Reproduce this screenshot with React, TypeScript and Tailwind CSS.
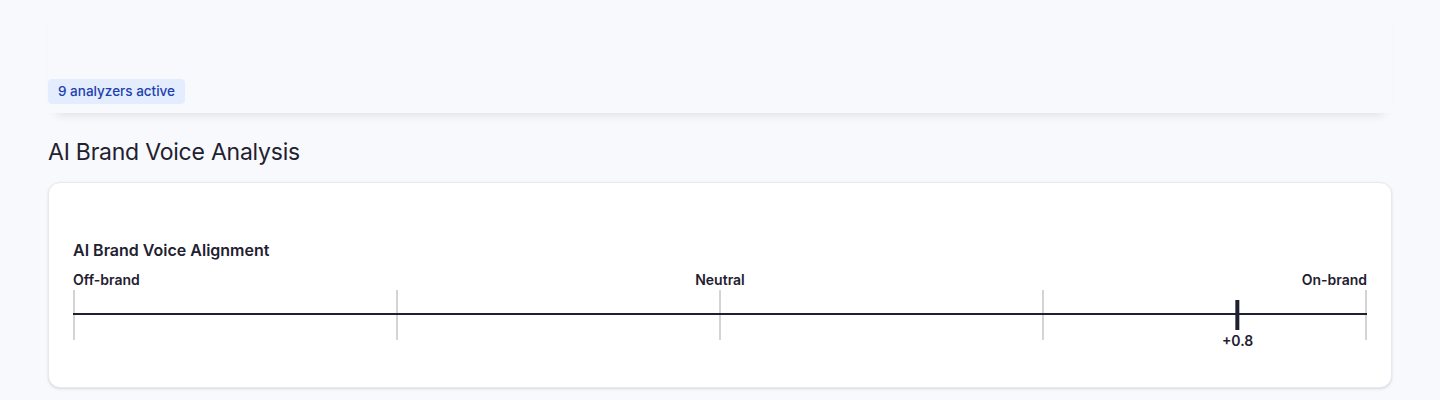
import React from "react"

const ticks = [0, 25, 50, 75, 100]

function AlignmentScale({ score }: { score: number }) {
  const pos = ((score + 1) / 2) * 100
  return (
    <div>
      <div className="grid grid-cols-3 text-sm font-semibold text-[#1f2130]">
        <span className="text-left">Off-brand</span>
        <span className="text-center">Neutral</span>
        <span className="text-right">On-brand</span>
      </div>
      <div className="relative flex h-[50px] justify-between">
        {ticks.map((t) => (
          <div key={t} className="h-full w-0.5 bg-[#d4d4d8]" />
        ))}
        <div className="absolute inset-x-0 top-[23px] h-0.5 bg-[#1f2130]" />
        <div
          className="absolute top-[10px] flex -translate-x-1/2 flex-col items-center gap-px"
          style={{ left: `${pos}%` }}
        >
          <div className="h-[30px] w-1 bg-[#1f2130]" />
          <span className="text-sm font-semibold text-[#1f2130]">+{score.toFixed(1)}</span>
        </div>
      </div>
    </div>
  )
}

function App() {
  return (
    <div className="min-h-screen bg-[#f8f9fc] px-12 font-['Inter',sans-serif]">
      <header className="flex bg-[#f8f9fc] pt-[79px] pb-[9px] shadow-[0_9px_10px_-8px_rgba(0,0,0,0.12)]">
        <span className="rounded bg-[#e4edfd] px-2.5 py-1 text-[13.5px] leading-[17px] font-medium text-[#1e40af]">
          9 analyzers active
        </span>
      </header>

      <h2 className="mt-[23px] text-[23px] leading-8 tracking-[-0.01em] text-[#1f2130]">
        AI Brand Voice Analysis
      </h2>

      <section className="mt-[14px] rounded-xl border border-[#e8e9ee] bg-white px-6 pt-[55px] pb-[47px] shadow-sm">
        <h3 className="mb-2 text-base font-semibold text-[#1f2130]">AI Brand Voice Alignment</h3>
        <AlignmentScale score={0.8} />
      </section>
    </div>
  )
}

export default App
